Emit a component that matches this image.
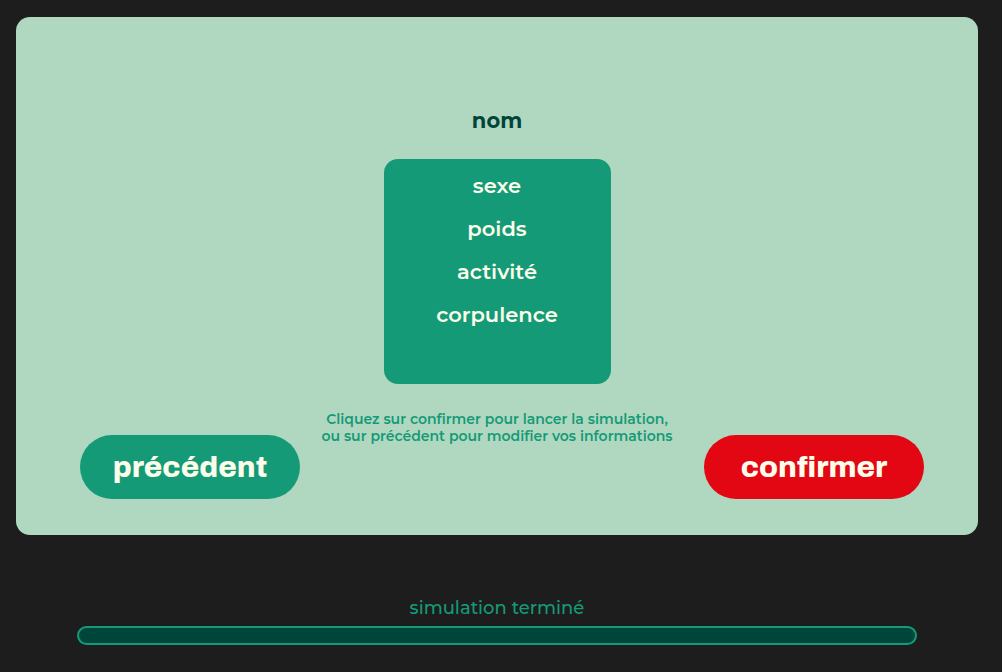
<main class="page">
  <section class="panel">
    <h1>nom</h1>
    <ul class="card">
      <li>sexe</li>
      <li>poids</li>
      <li>activité</li>
      <li>corpulence</li>
    </ul>
    <div class="footer">
      <button type="button" class="previous">précédent</button>
      <p>Cliquez sur confirmer pour lancer la simulation,<br />ou sur précédent pour modifier vos informations</p>
      <button type="button" class="confirm">confirmer</button>
    </div>
  </section>
  <section class="status">
    <span id="status-label">simulation terminé</span>
    <div class="track" role="progressbar" aria-labelledby="status-label" aria-valuemin="0" aria-valuemax="100" aria-valuenow="0"></div>
  </section>
</main>

<style>
  :global(body) {
    margin: 0;
    background: #1d1d1d;
  }
  .page {
    padding: 17px 24px 24px 16px;
    font-family: Montserrat, Inter, "Open Sans", sans-serif;
    font-weight: 600;
  }
  .panel {
    display: flex;
    flex-direction: column;
    align-items: center;
    padding: 88px 54px 36px;
    border-radius: 14px;
    background: #b0d8c1;
  }
  h1 {
    margin: 0 0 22px;
    font-size: 21px;
    line-height: 32px;
    font-weight: 700;
    color: #00453a;
  }
  .card {
    box-sizing: border-box;
    display: flex;
    flex-direction: column;
    gap: 11px;
    min-width: 227px;
    min-height: 225px;
    margin: 0 0 27px;
    padding: 11px 12px;
    border-radius: 14px;
    background: #159a77;
    color: #fcfcea;
    font-size: 21px;
    line-height: 32px;
    text-align: center;
    list-style: none;
  }
  .footer {
    display: grid;
    grid-template-columns: 1fr auto 1fr;
    align-self: stretch;
  }
  p {
    margin: 0;
    color: #159a77;
    font-size: 14px;
    line-height: 17px;
    text-align: center;
    white-space: nowrap;
  }
  button {
    width: 220px;
    height: 64px;
    margin-top: 24px;
    padding: 0;
    border: 0;
    border-radius: 32px;
    color: #fcfcea;
    font-family: Archivo, Inter, sans-serif;
    font-size: 30px;
    font-weight: 800;
    font-variant-ligatures: none;
    cursor: pointer;
  }
  .previous {
    margin-left: 10px;
    background: #159a77;
  }
  .confirm {
    justify-self: end;
    background: #e30613;
  }
  .status {
    display: flex;
    flex-direction: column;
    gap: 6px;
    padding: 61px 61px 0;
    color: #159a77;
    font-size: 18px;
    line-height: 24px;
    font-weight: 500;
    text-align: center;
  }
  .track {
    height: 15px;
    border: 2px solid #159a77;
    border-radius: 10px;
    background: #00453a;
  }
</style>
